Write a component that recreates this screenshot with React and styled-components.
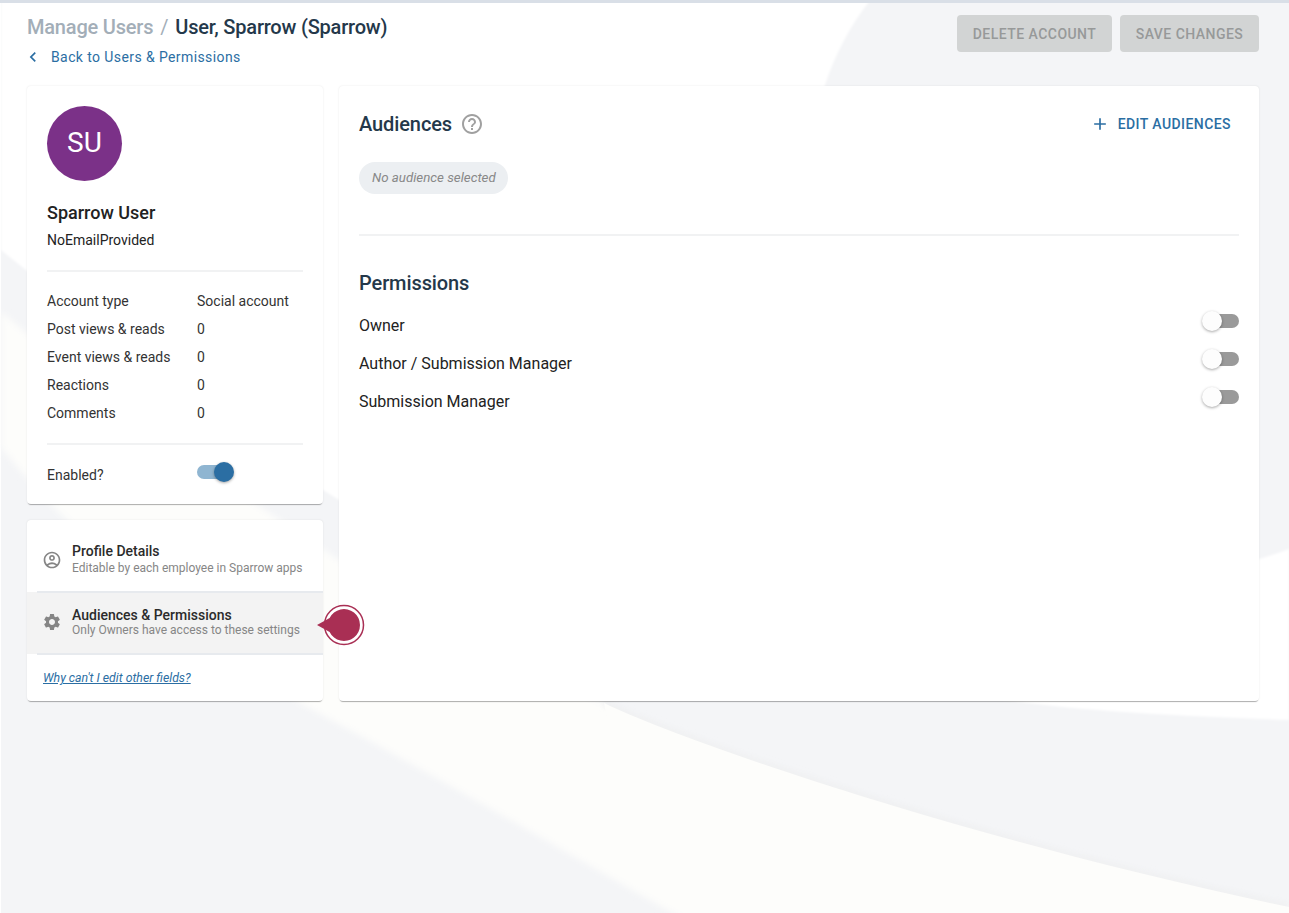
import { Fragment } from "react";
import styled, { createGlobalStyle } from "styled-components";
import {
  MdAdd,
  MdChevronLeft,
  MdHelpOutline,
  MdOutlineAccountCircle,
  MdSettings,
} from "react-icons/md";

const GlobalStyle = createGlobalStyle`
  html, body {
    margin: 0;
    padding: 0;
    background: #f4f5f7;
    font-family: Roboto, "Liberation Sans", sans-serif;
    color: #222;
  }
`;

const Page = styled.div`
  position: relative;
  height: 913px;
  overflow: hidden;
  border-top: 3px solid #d9dfe7;
  box-sizing: border-box;
`;

const Backdrop = styled.svg`
  position: absolute;
  top: -3px;
  left: 0;
`;

const Content = styled.div`
  position: relative;
  padding: 12px 30px 0 27px;
`;

const Header = styled.header`
  display: flex;
  justify-content: space-between;
  align-items: flex-start;
  height: 71px;
`;

const Breadcrumb = styled.h1`
  margin: 0;
  font-size: 20px;
  line-height: 24px;
  font-weight: 500;
  color: #24384a;
  letter-spacing: -0.2px;
`;

const Crumb = styled.span`
  color: #a3aeb8;
`;

const Slash = styled.span`
  color: #a3aeb8;
  font-weight: 400;
  margin: 0 7px;
`;

const BackLink = styled.a`
  display: flex;
  align-items: center;
  margin-top: 8px;
  font-size: 14px;
  line-height: 18px;
  letter-spacing: 0.4px;
  color: #2b6ea3;
  svg {
    margin-right: 8px;
    margin-left: -4px;
  }
`;

const Actions = styled.div`
  display: flex;
  gap: 8px;
`;

const ActionButton = styled.button`
  width: ${(p) => p.$width}px;
  height: 37px;
  border: 0;
  border-radius: 4px;
  background: #d2d4d4;
  color: #979999;
  font-family: inherit;
  font-size: 14px;
  font-weight: 500;
  letter-spacing: 0.47px;
  padding: 0;
`;

const Columns = styled.div`
  display: grid;
  grid-template-columns: 296px 920px;
  gap: 16px;
`;

const Side = styled.div`
  position: relative;
  z-index: 1;
  display: flex;
  flex-direction: column;
  gap: 16px;
`;

const Card = styled.section`
  position: relative;
  background: #fff;
  border-radius: 4px;
  box-shadow: 0 2px 1px -1px rgba(0, 0, 0, 0.3), 0 0 2px rgba(0, 0, 0, 0.1);
`;

const ProfileCard = styled(Card)`
  height: 418px;
  padding: 20px 20px 0;
  box-sizing: border-box;
`;

const Avatar = styled.div`
  width: 75px;
  height: 75px;
  padding-bottom: 2px;
  box-sizing: border-box;
  border-radius: 50%;
  background: #7b3188;
  color: #fff;
  font-size: 28px;
  display: flex;
  align-items: center;
  justify-content: center;
`;

const Name = styled.div`
  margin-top: 21px;
  font-size: 18px;
  line-height: 22px;
  font-weight: 500;
  color: #222;
`;

const Email = styled.div`
  margin-top: 6px;
  font-size: 14px;
  line-height: 20px;
`;

const Divider = styled.hr`
  margin: ${(p) => p.$margin};
  border: 0;
  height: 2px;
  background: #f1f2f3;
`;

const Stats = styled.div`
  display: grid;
  grid-template-columns: 150px 1fr;
  grid-auto-rows: 28px;
  align-items: center;
  font-size: 14px;
  color: #333;
`;

const EnabledRow = styled.div`
  display: grid;
  grid-template-columns: 150px 1fr;
  font-size: 14px;
  line-height: 20px;
  color: #333;
`;

const Track = styled.div`
  position: relative;
  width: 35px;
  height: 14px;
  margin-top: ${(p) => p.$offset || 0}px;
  border-radius: 7px;
  background: ${(p) => (p.$on ? "#8fb5d1" : "#9a9a9a")};
`;

const Thumb = styled.div`
  position: absolute;
  top: -3px;
  ${(p) => (p.$on ? "right: -2px;" : "left: -2px;")}
  width: 20px;
  height: 20px;
  border-radius: 50%;
  background: ${(p) => (p.$on ? "#2b6ea3" : "#fdfdfd")};
  box-shadow: 0 1px 3px rgba(0, 0, 0, 0.35);
`;

const NavCard = styled(Card)`
  height: 181px;
  padding-top: 10px;
  box-sizing: border-box;
`;

const NavItem = styled.div`
  position: relative;
  height: 62px;
  display: flex;
  align-items: center;
  padding: 0 0 2px 15px;
  box-sizing: border-box;
  gap: 10px;
  background: ${(p) => (p.$active ? "#f3f3f3" : "transparent")};
  color: #858585;
  ${(p) =>
    p.$active &&
    `
    &::before, &::after {
      content: "";
      position: absolute;
      left: 10px;
      right: 0;
      height: 2px;
      background: #e7eaee;
    }
    &::before { top: -1px; }
    &::after { bottom: -1px; }
  `}
`;

const NavText = styled.div`
  display: flex;
  flex-direction: column;
  gap: ${(p) => (p.$spaced ? 2 : 0)}px;
  margin-bottom: ${(p) => (p.$spaced ? 2 : 0)}px;
`;

const NavTitle = styled.div`
  font-size: 14px;
  line-height: 16px;
  font-weight: 500;
  color: #2b2b2b;
`;

const NavSub = styled.div`
  font-size: 12px;
  line-height: 15px;
  color: #868686;
`;

const HelpLink = styled.a`
  display: block;
  margin: 16px 0 0 16px;
  font-size: 12.3px;
  line-height: 16px;
  font-style: italic;
  color: #2b6ea3;
  text-decoration: underline;
`;

const Pin = styled.svg`
  position: absolute;
  top: 11px;
  right: -44px;
`;

const MainCard = styled(Card)`
  height: 615px;
  padding: 0 20px;
  box-sizing: border-box;
`;

const TitleRow = styled.div`
  display: flex;
  align-items: center;
  justify-content: space-between;
  height: 76px;
`;

const TitleGroup = styled.div`
  display: flex;
  align-items: center;
  gap: 8px;
  color: #a0a0a0;
`;

const SectionTitle = styled.h2`
  margin: 0 0 ${(p) => p.$below || 0}px;
  font-size: 20px;
  line-height: 24px;
  font-weight: 500;
  letter-spacing: -0.1px;
  color: #24384a;
`;

const EditButton = styled.a`
  display: flex;
  align-items: center;
  gap: 8px;
  margin-right: 8px;
  font-size: 14px;
  font-weight: 500;
  letter-spacing: 0.43px;
  color: #2b6ea3;
`;

const Pill = styled.div`
  display: inline-block;
  height: 32px;
  line-height: 31px;
  padding: 0 12px 0 13px;
  border-radius: 16px;
  background: #eceff2;
  font-size: 13.3px;
  font-style: italic;
  color: #888;
`;

const PermissionRow = styled.div`
  display: flex;
  justify-content: space-between;
  height: 38px;
  font-size: 16px;
  line-height: 20px;
  padding-top: 5px;
  box-sizing: border-box;
  color: #222;
`;

const stats = [
  ["Account type", "Social account"],
  ["Post views & reads", "0"],
  ["Event views & reads", "0"],
  ["Reactions", "0"],
  ["Comments", "0"],
];

const permissions = ["Owner", "Author / Submission Manager", "Submission Manager"];

function Toggle({ on, offset }) {
  return (
    <Track $on={on} $offset={offset}>
      <Thumb $on={on} />
    </Track>
  );
}

export default function App() {
  return (
    <Page>
      <GlobalStyle />
      <Backdrop width="1289" height="913" viewBox="0 0 1289 913">
        <defs>
          <filter id="soft" x="-5%" y="-5%" width="110%" height="110%">
            <feGaussianBlur stdDeviation="3" />
          </filter>
          <filter id="softer" x="-5%" y="-5%" width="110%" height="110%">
            <feGaussianBlur stdDeviation="1" />
          </filter>
        </defs>
        <rect x="0" y="0" width="1" height="913" fill="#fff" />
        <path
          d="M1 -2 H872 C850 25 835 55 825 85 C800 170 820 430 900 520 C980 600 1150 600 1289 549 V720 C1180 716 1100 712 1028 703 C800 672 560 640 323 490 C220 420 100 330 1 250 Z"
          fill="#fff"
          filter="url(#softer)"
        />
        <path
          d="M1 312 C90 385 180 455 280 520 C380 590 490 655 604 703 C680 740 960 838 1289 907 V925 H694 C630 890 480 800 300 703 C190 620 90 560 1 447 Z"
          fill="#fdfdfb"
          filter="url(#soft)"
        />
        <path
          d="M604 703 C680 740 960 838 1289 907"
          fill="none"
          stroke="#e9eaec"
          strokeWidth="4"
          filter="url(#soft)"
        />
        <path
          d="M604 703 C680 740 960 838 1289 907 V920 H720 L640 880 Z"
          fill="#fdfdfb"
        />
      </Backdrop>
      <Content>
        <Header>
          <div>
            <Breadcrumb>
              <Crumb>Manage Users</Crumb>
              <Slash>/</Slash>
              User, Sparrow (Sparrow)
            </Breadcrumb>
            <BackLink>
              <MdChevronLeft size={20} />
              <span>Back to Users &amp; Permissions</span>
            </BackLink>
          </div>
          <Actions>
            <ActionButton $width={155}>DELETE ACCOUNT</ActionButton>
            <ActionButton $width={139}>SAVE CHANGES</ActionButton>
          </Actions>
        </Header>
        <Columns>
          <Side>
            <ProfileCard>
              <Avatar>SU</Avatar>
              <Name>Sparrow User</Name>
              <Email>NoEmailProvided</Email>
              <Divider $margin="20px 0 15px" />
              <Stats>
                {stats.map(([label, value]) => (
                  <Fragment key={label}>
                    <div>{label}</div>
                    <div>{value}</div>
                  </Fragment>
                ))}
              </Stats>
              <Divider $margin="16px 0 20px" />
              <EnabledRow>
                <span>Enabled?</span>
                <Toggle on />
              </EnabledRow>
            </ProfileCard>
            <NavCard>
              <NavItem>
                <MdOutlineAccountCircle size={20} />
                <NavText $spaced>
                  <NavTitle>Profile Details</NavTitle>
                  <NavSub>Editable by each employee in Sparrow apps</NavSub>
                </NavText>
              </NavItem>
              <NavItem $active>
                <MdSettings size={20} />
                <NavText>
                  <NavTitle>Audiences &amp; Permissions</NavTitle>
                  <NavSub>Only Owners have access to these settings</NavSub>
                </NavText>
                <Pin width="50" height="44" viewBox="0 0 50 44">
                  <circle cx="27" cy="22" r="19.5" fill="#fff" stroke="#a92f54" strokeWidth="1.5" />
                  <path d="M0 22 L12.6 15 A16 16 0 1 1 12.6 29 Z" fill="#a92f54" />
                </Pin>
              </NavItem>
              <HelpLink>Why can't I edit other fields?</HelpLink>
            </NavCard>
          </Side>
          <MainCard>
            <TitleRow>
              <TitleGroup>
                <SectionTitle>Audiences</SectionTitle>
                <MdHelpOutline size={24} />
              </TitleGroup>
              <EditButton>
                <MdAdd size={20} />
                <span>EDIT AUDIENCES</span>
              </EditButton>
            </TitleRow>
            <Pill>No audience selected</Pill>
            <Divider $margin="40px 0 35px" />
            <SectionTitle $below={16}>Permissions</SectionTitle>
            {permissions.map((name) => (
              <PermissionRow key={name}>
                <span>{name}</span>
                <Toggle offset={-2} />
              </PermissionRow>
            ))}
          </MainCard>
        </Columns>
      </Content>
    </Page>
  );
}
